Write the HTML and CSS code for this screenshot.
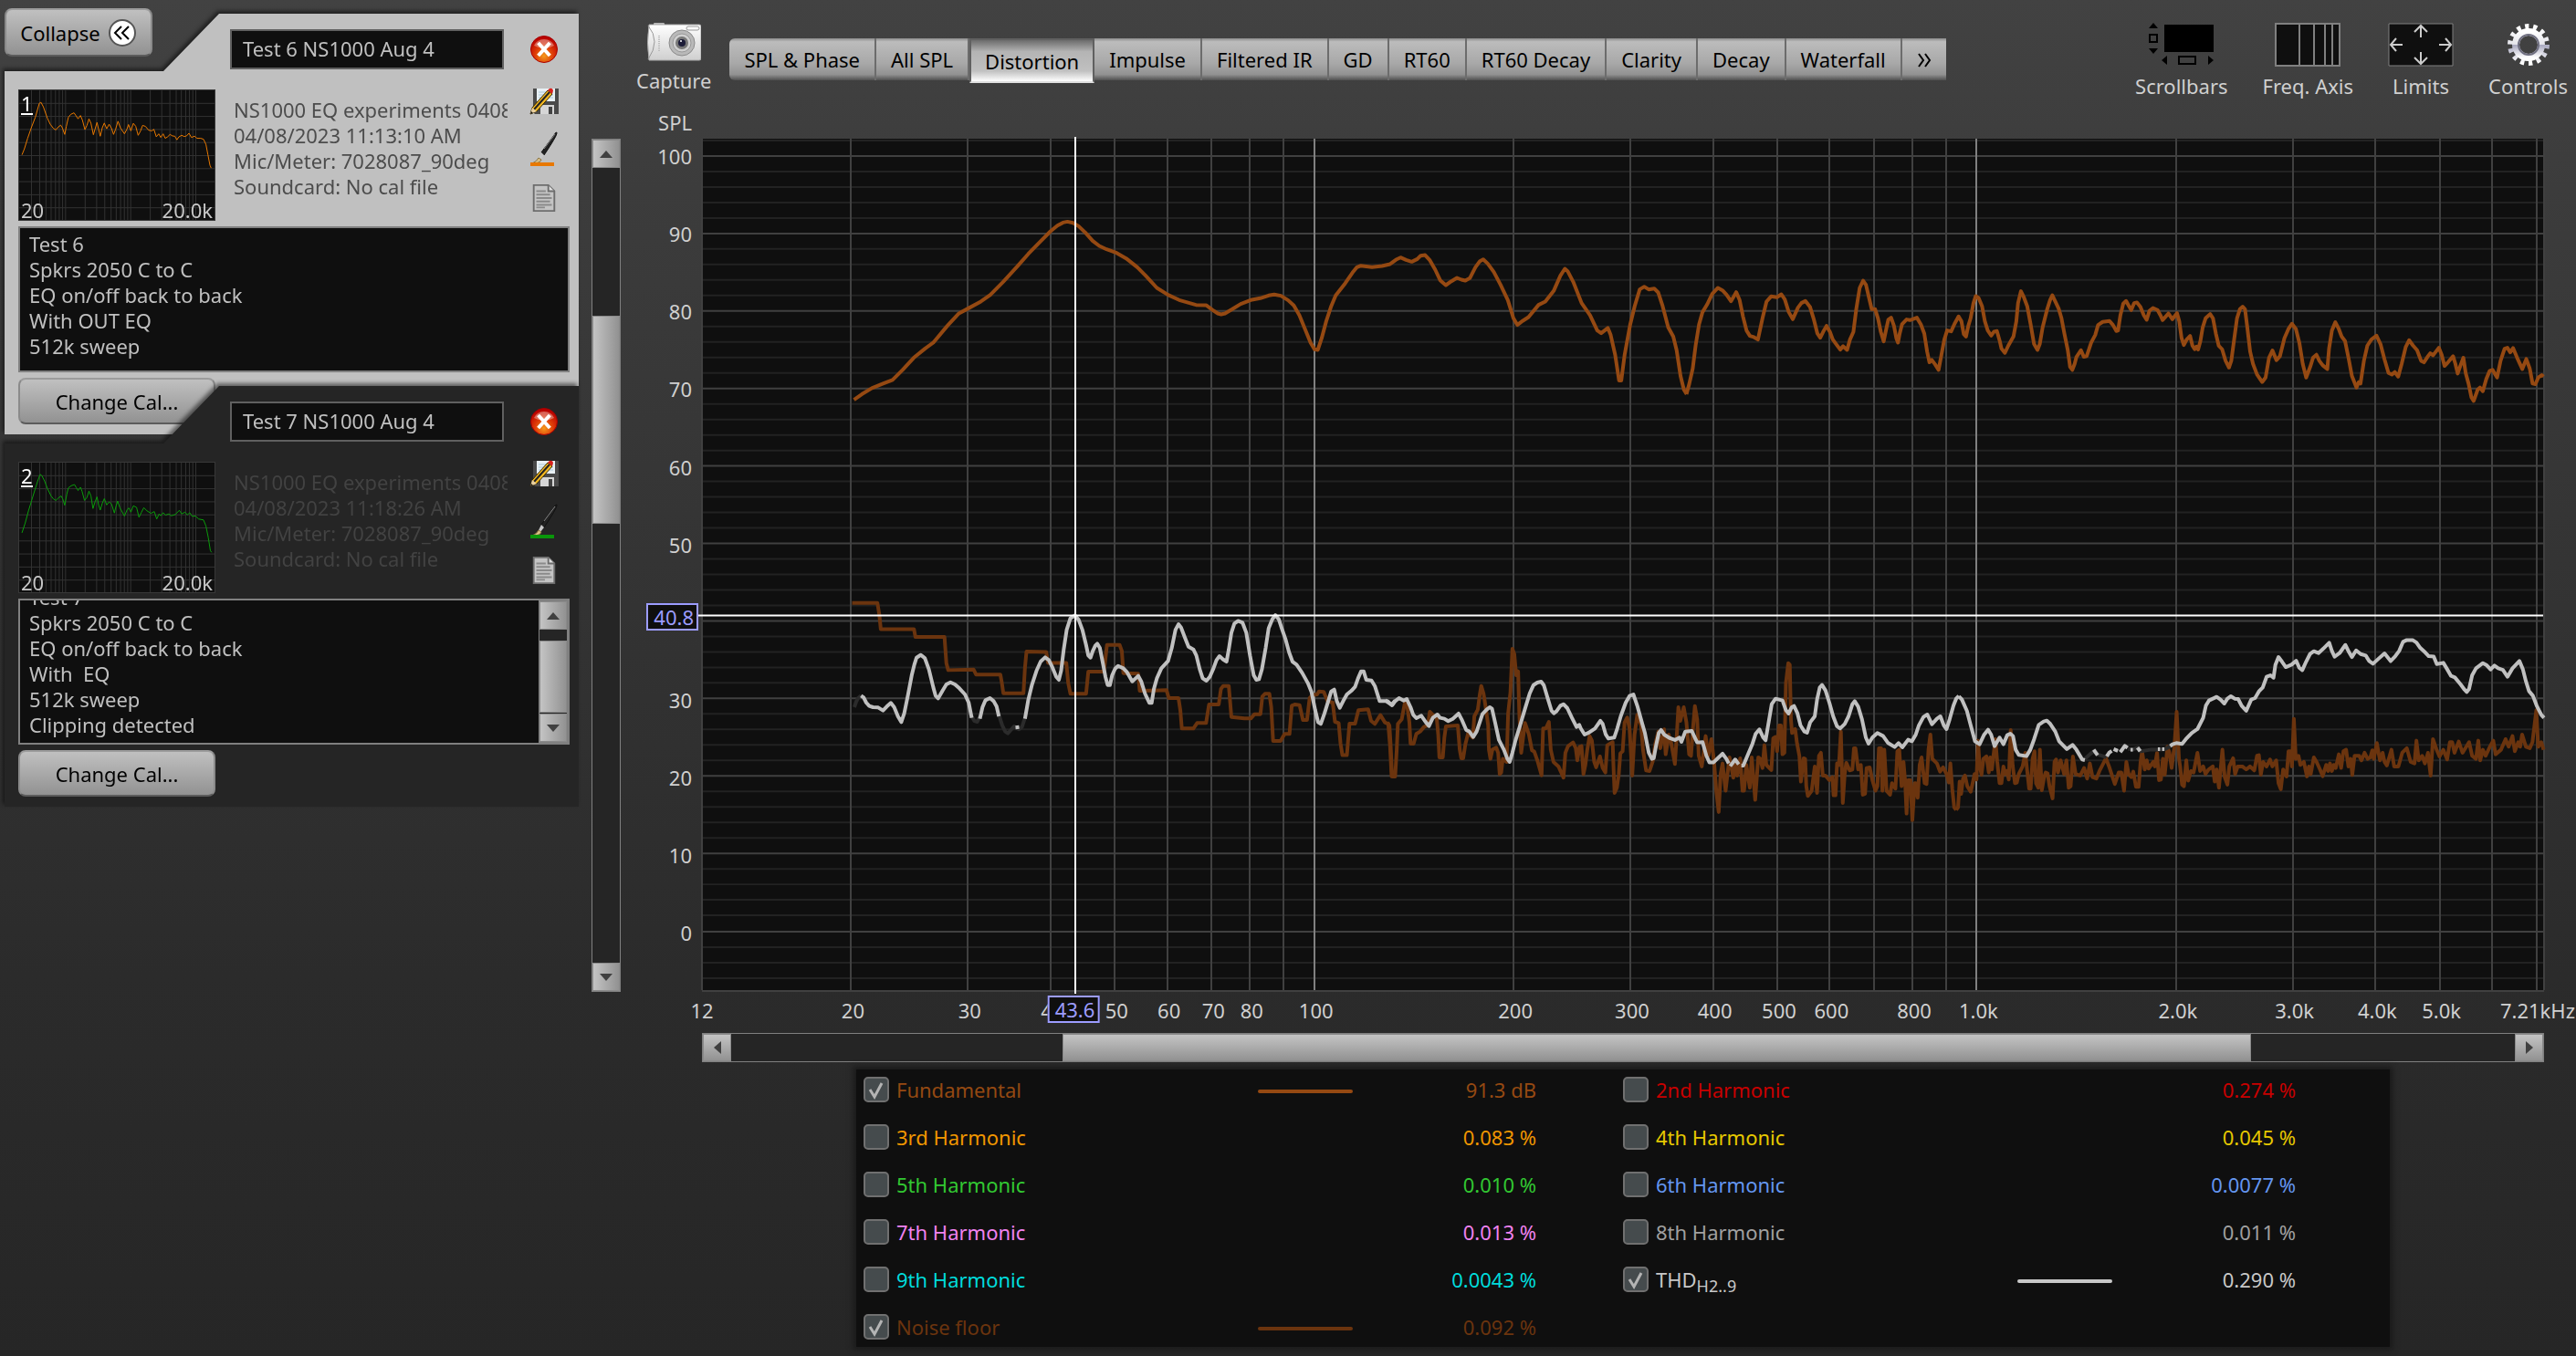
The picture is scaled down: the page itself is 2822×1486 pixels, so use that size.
FILE: index.html
```html
<!DOCTYPE html>
<html lang="en">
  <head>
    <meta charset="UTF-8" />
    <meta name="viewport" content="width=device-width, initial-scale=1.0" />
    <title>Distortion</title>
    <link rel="stylesheet" href="styles.css">
  </head>
  <body>
    <!-- shared icons -->
    <svg class="defs" aria-hidden="true">
      <defs>
        <radialGradient id="redBall" cx=".5" cy=".75" r=".7">
          <stop offset="0" stop-color="#f59a1c" />
          <stop offset=".5" stop-color="#dd3a08" />
          <stop offset="1" stop-color="#b80000" />
        </radialGradient>
        <linearGradient id="metal" x1="0" y1="0" x2="0" y2="1">
          <stop offset="0" stop-color="#ffffff" />
          <stop offset=".48" stop-color="#e4e4ea" />
          <stop offset=".52" stop-color="#a9a9c0" />
          <stop offset="1" stop-color="#ffffff" />
        </linearGradient>
        <linearGradient id="white" x1="0" y1="0" x2="0" y2="1">
          <stop offset="0" stop-color="#ffffff" />
          <stop offset="1" stop-color="#cfcfcf" />
        </linearGradient>
        <symbol id="icon-close" viewBox="0 0 32 32">
          <circle cx="16" cy="16" r="14.5" fill="url(#redBall)" stroke="#a80000" stroke-width="1" />
          <path d="M5 12a11.500 10 0 0 1 22 0q-11 6-22 0z" fill="#fff" opacity=".35" />
          <path d="M11 10.500l10 11M21 10.500l-10 11" stroke="#fff" stroke-width="4" stroke-linecap="square" />
        </symbol>
        <symbol id="icon-save" viewBox="0 0 32 32">
          <path d="M4 2h28v28H6l-2-2z" fill="#4a4a4a" />
          <path d="M8 2h20v14H8z" fill="#e8f0f4" />
          <path d="M10 6h16M10 9h16M10 12h16" stroke="#a9c8d8" stroke-width="1" />
          <path d="M12 20h15v10H12z" fill="#d6d6d6" />
          <path d="M21 22h4v8h-4z" fill="#444" />
          <path d="M1 30l2-7L20 4l5 4L8 27z" fill="#f2b822" stroke="#3a2a00" stroke-width="1" />
          <path d="M5 25L22 6" stroke="#222" stroke-width="2" />
          <path d="M20 4l2-2q3-1 4 2l-1 4z" fill="#d8201c" />
          <path d="M1 30l2-7 5 4z" fill="#e8cfa0" />
          <path d="M1 30l1-3 2 2z" fill="#111" />
        </symbol>
        <symbol id="icon-brush" viewBox="0 0 32 40">
          <path d="M13 23L27 4q3-5 3-2 0 3-14 24z" fill="#222" stroke="#111" stroke-width="1" />
          <path d="M16 19L28 3" stroke="#888" stroke-width="1" />
          <path d="M13 23l3 3-4 5-2-2z" fill="#c8c8c8" />
          <path d="M3 35q5-2 7-6l3 2q-1 4-10 4z" fill="#d9bf86" stroke="#8b7340" stroke-width="1" />
          <path d="M1 34h26v4H1z" fill="currentColor" />
        </symbol>
        <symbol id="icon-doc" viewBox="0 0 32 34">
          <path d="M4 2h17l7 7v23H4z" fill="#c4c4c4" stroke="#6d6d6d" stroke-width="2" />
          <path d="M21 2v7h7" fill="#e0e0e0" stroke="#6d6d6d" stroke-width="2" />
          <path d="M7 9h11M7 13h16M7 17h18M7 21h16M7 25h18M7 28h10" stroke="#8a8a8a" stroke-width="2" />
        </symbol>
      </defs>
    </svg>

    <aside class="sidebar">
      <button class="btn collapse" type="button">Collapse
        <svg viewBox="0 0 32 32" width="32" height="32" aria-hidden="true">
          <circle cx="16" cy="16" r="14" fill="#fff" stroke="#555" stroke-width="2" />
          <path d="M15 9l-7 7 7 7M23 9l-7 7 7 7" fill="none" stroke="#000" stroke-width="2" />
        </svg>
      </button>

      <section class="card card-active">
        <div class="card-body">
          <div class="name-row">
            <input class="name" type="text" value="Test 6 NS1000 Aug 4" aria-label="Measurement name">
            <button class="icon-btn" type="button" aria-label="Remove"><svg><use href="#icon-close" /></svg></button>
          </div>
          <div class="info">
            <div class="thumb">
              <svg class="thumb-plot" viewBox="0 0 216 144" preserveAspectRatio="none" aria-hidden="true">
                <g class="thumb-grid"></g>
                <g class="trace-orange" transform="scale(.446 .3333) translate(-45 -295)">
                  <polyline points="52,510 58,490 66,455 75,420 85,385 95,338 99,335 105,350 115,388 122,408 130,422 136,427 142,417 148,411 152,420 158,442 162,415 167,385 173,375 181,370 186,380 191,390 197,379 202,395 208,426 213,412 218,390 223,405 229,443 233,425 238,402 242,425 246,448 251,420 256,404 262,423 268,408 274,422 279,442 284,425 290,398 296,420 306,440 312,425 316,409 322,430 328,405 334,415 340,445 346,430 351,412 358,415 366,428 374,430 379,425 385,450 391,440 396,452 402,440 407,455 413,450 419,442 425,447 431,448 436,460 441,450 448,445 454,449 460,447 466,438 472,452 480,448 486,455 495,455 502,458 508,475 513,510 518,545 521,554" />
                </g>
              </svg>
              <span class="thumb-no">1</span>
              <span class="thumb-lo">20</span>
              <span class="thumb-hi">20.0k</span>
            </div>
            <div class="meta">
              <div>NS1000 EQ experiments 040823</div>
              <div>04/08/2023 11:13:10 AM</div>
              <div>Mic/Meter: 7028087_90deg</div>
              <div>Soundcard: No cal file</div>
            </div>
            <div class="tools">
              <button class="icon-btn" type="button" aria-label="Save"><svg><use href="#icon-save" /></svg></button>
              <button class="icon-btn brush orange" type="button" aria-label="Trace colour"><svg><use href="#icon-brush" /></svg></button>
              <button class="icon-btn" type="button" aria-label="Notes"><svg><use href="#icon-doc" /></svg></button>
            </div>
          </div>
          <div class="notes">
            <textarea aria-label="Notes">Test 6
Spkrs 2050 C to C
EQ on/off back to back
With OUT EQ
512k sweep</textarea>
          </div>
          <button class="btn cal" type="button">Change Cal...</button>
        </div>
      </section>

      <section class="card card-dark">
        <div class="card-body">
          <div class="name-row">
            <input class="name" type="text" value="Test 7 NS1000 Aug 4" aria-label="Measurement name">
            <button class="icon-btn" type="button" aria-label="Remove"><svg><use href="#icon-close" /></svg></button>
          </div>
          <div class="info">
            <div class="thumb">
              <svg class="thumb-plot" viewBox="0 0 216 144" preserveAspectRatio="none" aria-hidden="true">
                <g class="thumb-grid"></g>
                <g class="trace-green" transform="scale(.446 .3333) translate(-45 -319)">
                  <polyline points="52,553 60,520 68,480 76,445 84,410 91,380 97,358 101,362 108,380 115,405 124,430 130,440 136,445 142,437 149,430 153,440 158,461 163,425 167,403 174,396 182,392 187,403 191,412 197,401 201,415 207,445 213,435 218,414 223,430 228,472 233,450 238,433 242,460 246,477 251,455 256,439 262,460 268,450 274,457 281,487 285,465 289,447 295,470 306,497 313,475 317,470 322,484 328,463 336,468 342,501 348,485 354,469 362,480 372,488 380,482 386,507 392,490 396,496 402,486 408,494 416,490 422,496 432,492 442,478 448,490 456,484 462,493 468,486 474,498 482,497 490,507 502,510 508,530 514,570 519,612 522,618" />
                </g>
              </svg>
              <span class="thumb-no">2</span>
              <span class="thumb-lo">20</span>
              <span class="thumb-hi">20.0k</span>
            </div>
            <div class="meta">
              <div>NS1000 EQ experiments 040823</div>
              <div>04/08/2023 11:18:26 AM</div>
              <div>Mic/Meter: 7028087_90deg</div>
              <div>Soundcard: No cal file</div>
            </div>
            <div class="tools">
              <button class="icon-btn" type="button" aria-label="Save"><svg><use href="#icon-save" /></svg></button>
              <button class="icon-btn brush green" type="button" aria-label="Trace colour"><svg><use href="#icon-brush" /></svg></button>
              <button class="icon-btn" type="button" aria-label="Notes"><svg><use href="#icon-doc" /></svg></button>
            </div>
          </div>
          <div class="notes">
            <textarea class="scrolled" aria-label="Notes">Test 7
Spkrs 2050 C to C
EQ on/off back to back
With  EQ
512k sweep
Clipping detected</textarea>
            <div class="scroll vertical">
              <button type="button" class="arrow up" aria-label="Scroll up"></button>
              <div class="track"><div class="handle notes-handle"></div></div>
              <button type="button" class="arrow down" aria-label="Scroll down"></button>
            </div>
          </div>
          <button class="btn cal" type="button">Change Cal...</button>
        </div>
      </section>
    </aside>

    <main class="main">
      <header class="toolbar">
        <button class="tool" type="button">
          <svg viewBox="0 0 60 42" width="60" height="42" aria-hidden="true">
            <rect x="8" y="0" width="12" height="4" rx="1" fill="#bbb" />
            <path d="M3 2h55q2 0 2 2v35q0 2-2 2H3q-3-19 0-39z" fill="url(#white)" stroke="#aaa" />
            <path d="M2 3q14 17 0 37" fill="none" stroke="#999" />
            <rect x="44" y="4" width="14" height="4" rx="2" fill="none" stroke="#999" />
            <path d="M14 14v18" stroke="#bbb" stroke-width="2" stroke-dasharray="1 1" />
            <circle cx="39" cy="22" r="14" fill="#b9b9b9" stroke="#8a8a8a" />
            <circle cx="39" cy="22" r="10" fill="#d0d0d0" stroke="#999" />
            <circle cx="39" cy="22" r="7" fill="#777" />
            <circle cx="39" cy="22" r="4" fill="#1c1c38" />
            <circle cx="38" cy="20" r="1" fill="#fff" />
          </svg>
          Capture
        </button>
        <nav class="tabs">
          <button type="button">SPL &amp; Phase</button>
          <button type="button">All SPL</button>
          <button type="button" class="selected">Distortion</button>
          <button type="button">Impulse</button>
          <button type="button">Filtered IR</button>
          <button type="button">GD</button>
          <button type="button">RT60</button>
          <button type="button">RT60 Decay</button>
          <button type="button">Clarity</button>
          <button type="button">Decay</button>
          <button type="button">Waterfall</button>
          <button type="button" aria-label="More">
            <svg viewBox="0 0 16 16" width="16" height="16"><path d="M2 1l5 7-5 7M9 1l5 7-5 7" fill="none" stroke="#000" stroke-width="2" /></svg>
          </button>
        </nav>
        <div class="options">
          <button class="tool" type="button">
            <svg viewBox="0 0 72 48" width="72" height="48" aria-hidden="true">
              <path d="M17 2h54v30H17zM5 0l5 6H0zM5 34l5-6H0zM14 41l6-5v10zM71 41l-6-5v10z" />
              <path d="M1 13h8v8H1zM33 37h18v8H33z" fill="none" stroke="#000" stroke-width="2" />
            </svg>
            Scrollbars
          </button>
          <button class="tool" type="button">
            <svg viewBox="0 0 72 48" width="72" height="48" aria-hidden="true">
              <path d="M1 1h70v46H1z" fill="#0f0f0f" stroke="#808080" stroke-width="2" />
              <path d="M27 1v46M43 1v46M55 1v46M63 1v46" stroke="#808080" stroke-width="2" />
            </svg>
            Freq. Axis
          </button>
          <button class="tool" type="button">
            <svg viewBox="0 0 72 48" width="72" height="48" aria-hidden="true">
              <path d="M1 1h70v46H1z" fill="#0f0f0f" stroke="#808080" />
              <path d="M36 16V3M29 10l7-7 7 7M36 32v13M29 38l7 7 7-7M16 24H3M9 17l-6 7 6 7M56 24h13M63 17l6 7-6 7" fill="none" stroke="#ccc" stroke-width="2" />
            </svg>
            Limits
          </button>
          <button class="tool" type="button">
            <svg viewBox="-24 -24 48 48" width="48" height="48" aria-hidden="true">
              <circle r="20" fill="none" stroke="url(#metal)" stroke-width="6" stroke-dasharray="4.200 4.780" />
              <circle r="14" fill="none" stroke="url(#metal)" stroke-width="8" />
              <circle r="11" fill="none" stroke="#6f6f80" stroke-width="2" />
            </svg>
            Controls
          </button>
        </div>
      </header>

      <div class="scroll vertical spl-scroll">
        <button type="button" class="arrow up" aria-label="Scroll up"></button>
        <div class="track"><div class="handle spl-handle"></div></div>
        <button type="button" class="arrow down" aria-label="Scroll down"></button>
      </div>

      <div class="y-title">SPL</div>
      <div class="y-axis"></div>

      <div class="plot">
        <svg viewBox="0 0 2018 934" preserveAspectRatio="none" role="img" aria-label="Distortion plot">
          <g id="grid"></g>

          <g class="fundamental">
            <polyline transform="translate(131 -3) scale(.61224 .33333)" points="58,868 72,850 90,830 110,815 127,803 145,770 165,730 185,700 200,680 225,625 245,585 262,568 285,545 302,523 325,480 350,430 370,388 390,350 410,313 422,295 432,285 440,282 450,286 460,297 472,318 485,345 497,362 510,373 528,385 545,403 565,432 580,460 600,500 620,523 640,540 670,556 688,557 700,573 709,584 715,587 722,584 735,570 750,553 768,540 785,534 800,525 810,522 822,526 835,541 845,558 855,590 865,635 875,680 882,702 888,704 895,665 903,610 912,560 920,525 937,485 950,450 958,432 965,427 985,432 1003,428 1017,422 1028,407 1036,400 1046,408 1056,414 1066,405 1072,394 1080,392 1088,408 1098,440 1107,475 1117,491 1127,478 1137,467 1145,473 1152,476 1160,468 1170,432 1178,412 1184,406 1192,420 1203,448 1215,490 1228,540 1238,600 1245,622 1255,608 1265,596 1283,556 1295,545 1310,510 1322,460 1330,437 1335,445 1345,480 1360,550 1375,590 1388,640 1395,649 1407,632 1412,655 1420,720 1427,805 1431,805 1437,720 1447,620 1455,560 1464,505 1472,496 1480,505 1490,502 1497,515 1505,560 1515,630 1524,660 1530,705 1537,790 1543,835 1548,850" />
            <polyline transform="translate(1071 97) scale(.62629 .33333)" points="12,550 17,515 23,465 28,390 34,320 40,280 48,255 57,220 67,200 75,208 82,222 90,244 99,214 105,240 111,295 117,340 123,358 130,362 137,370 145,300 152,245 160,228 170,231 178,221 184,238 191,280 198,303 207,265 213,250 220,243 228,262 235,305 241,350 246,364 251,345 257,325 263,345 268,370 275,388 281,403 286,392 293,404 298,370 304,345 309,270 315,200 321,176 326,190 331,230 336,270 342,270 347,300 352,345 357,376 362,330 365,305 370,298 375,325 379,365 382,380 385,350 389,320 397,304 403,306 415,298 422,320 428,350 433,410 437,445 441,437 447,452 453,470 458,420 463,370 468,340 475,343 481,318 488,294 493,310 497,352 501,360 505,325 509,300 514,250 518,227 523,233 529,260 534,310 539,340 545,357 550,344 555,342 560,375 563,400 569,414 575,390 584,360 589,310 592,250 597,211 602,230 608,260 614,320 620,385 626,404 630,385 635,330 643,270 648,240 652,224 656,240 663,268 668,300 673,350 679,405 683,460 687,470 691,450 694,428 702,405 707,427 712,425 720,380 727,355 732,322 740,312 752,309 758,322 764,342 767,340 771,290 776,252 781,243 786,260 790,273 795,250 800,248 806,262 812,290 817,305 822,275 828,266 836,273 841,290 845,306 850,295 855,284 862,303 870,283 874,310 878,365 882,388 887,370 893,358 897,390 901,402 904,393 907,403 911,375 915,330 920,300 928,286 933,300 938,350 943,390 949,402 955,440 961,462 965,440 970,370 975,300 980,270 985,262 989,270 993,330 998,410 1003,450 1010,485 1019,510 1025,495 1031,430 1037,406 1044,438 1050,425 1058,365 1065,335 1071,318 1078,335 1084,380 1090,450 1096,495 1103,460 1108,430 1114,420 1119,440 1125,455 1133,467 1136,400 1141,340 1147,313 1153,335 1158,360 1164,375 1170,430 1176,490 1184,528 1188,510 1191,515 1197,440 1203,390 1210,370 1219,357 1226,385 1233,435 1240,480 1246,485 1251,477 1257,492 1263,450 1270,395 1276,372 1283,390 1290,405 1297,440 1302,445 1309,425 1313,415 1318,422 1328,397 1333,420 1338,457 1344,445 1353,425 1357,450 1361,482 1366,455 1371,430 1375,480 1380,515 1385,560 1389,572 1396,535 1400,528 1405,540 1411,500 1417,473 1422,470 1430,495 1436,440 1443,400 1448,397 1453,412 1458,398 1465,430 1474,467 1481,434 1487,465 1492,515 1497,517 1502,495 1508,487 1511,492" />
          </g>

          <g class="noise">
            <polyline transform="translate(131 467) scale(.40816 .33333)" points="82,127 150,127 155,165 159,213 248,213 252,239 330,239 335,325 340,348 408,346 415,363 480,363 484,390 488,424 542,424 546,340 550,287 603,288 608,324 657,324 662,390 668,426 710,426 716,353 758,353 763,300 766,265 800,265 806,285 810,358 850,360 854,416 926,414 932,440 958,440 963,480 967,540 998,540 1008,522 1032,522 1040,461 1066,461 1072,410 1078,400 1093,400 1100,502 1135,507 1152,507 1162,493 1178,493 1183,435 1190,426 1202,426 1207,470 1212,581 1232,581 1243,558 1256,558 1262,465 1270,461 1283,463 1292,512 1303,512 1310,440 1318,430 1330,428 1335,418 1348,420 1358,450 1372,455 1378,518 1388,522 1393,590 1398,628 1410,628 1417,524 1432,524 1441,480 1467,477 1475,515 1485,525 1500,496 1512,520 1521,525 1526,600 1530,697 1539,697" />
            <polyline transform="translate(751 497) scale(.42091 .33333)" points="0,430 5,440 8,500 12,608 20,608 24,520 27,435 37,420 45,367 51,372 57,430 60,500 68,500 75,468 85,460 95,445 105,440 110,395 118,405 128,415 132,470 135,545 144,545 148,480 152,443 183,440 188,520 192,548 197,548 203,500 210,465 222,480 226,410 235,388 240,340 244,310 250,335 255,375 262,440 264,520 268,550 273,520 283,513 288,530 292,600 296,595 300,550 310,560 314,400 320,330 325,188 330,205 335,275 340,262 343,400 348,530 353,480 358,432 368,470 376,522 382,526 390,555 401,604 405,450 412,450 420,428 425,520 432,560 445,575 458,612 463,530 470,508 483,496 490,515 494,555 500,510 505,508 510,600 515,570 520,520 526,475 532,490 538,560 543,578 553,542 560,580 567,595 572,505 586,495 588,570 591,662 597,645 602,600 606,532 612,525 617,430 624,414 630,450 637,605 643,470 650,405 660,440 665,520 673,588 682,590 690,560 697,500 705,460 710,515 720,453 724,535 732,470 738,495 748,567 753,470 757,380 762,425 771,380 778,430 785,535 790,540 795,450 800,376 806,420 810,540 818,575 828,475 835,540 843,485 850,560 856,660 862,725 867,600 872,565 880,655 890,545 900,612 905,560 910,605 918,548 924,655 928,655 934,570 943,645 948,545 957,685 965,545 970,550 976,580 981,505 986,570 999,587 1004,482 1010,478 1014,525 1019,440 1024,440 1028,535 1033,530 1037,300 1043,235 1047,240 1050,420 1053,465 1061,452 1066,500 1072,540 1076,625 1083,548 1087,550 1090,640 1094,672 1104,655 1112,575 1118,662 1123,540 1128,530 1133,605 1140,605 1150,620 1158,610 1161,670 1166,670 1170,565 1175,570 1180,460 1185,695 1190,600 1194,563 1203,588 1210,585 1214,515 1218,515 1225,585 1232,570 1237,668 1243,665 1247,580 1255,578 1262,620 1270,655 1275,640 1279,515 1285,515 1288,655 1293,520 1299,655 1308,668 1313,630 1322,648 1327,525 1332,520 1338,640 1343,560 1347,620 1351,730 1355,620 1361,620 1366,752 1372,630 1375,630 1380,678 1385,570 1390,545 1398,630 1403,633 1408,520 1413,470 1418,550 1430,565 1438,592 1446,578 1455,600 1461,628 1465,565 1470,650 1475,710 1480,718" />
            <polyline transform="translate(1371 507) scale(.42091 .33333)" points="7,688 12,680 16,595 20,635 25,585 30,575 36,610 45,628 50,600 55,570 60,588 64,460 68,540 73,572 78,520 86,512 92,565 96,515 100,555 105,500 109,455 114,530 120,600 125,600 130,545 135,570 139,560 144,588 149,425 154,540 160,600 165,598 170,570 180,545 187,500 192,560 197,618 201,618 206,520 211,495 215,600 221,615 225,490 230,623 236,580 240,565 245,568 250,610 258,650 263,530 267,522 272,565 279,525 288,570 294,525 300,615 305,610 311,512 318,570 330,575 340,550 348,585 355,535 362,580 372,585 380,560 397,518 405,545 420,603 430,565 437,565 444,625 450,530 456,570 463,580 468,562 475,612 482,612 487,530 491,495 498,555 503,525 508,552 520,530 524,545 530,500 535,590 540,588 545,520 550,572 557,480 562,500 568,550 575,480 581,365 587,520 590,545 595,605 600,610 606,525 611,592 618,560 625,565 635,500 642,560 650,545 656,570 664,555 675,545 680,595 685,555 691,615 700,490 706,580 713,605 718,545 728,518 733,570 740,545 752,545 762,555 772,545 783,558 790,510 795,508 800,572 806,530 815,545 824,522 830,545 840,525 846,600 852,620 858,555 867,578 872,495 877,495 881,545 886,388 891,520 898,510 903,540 912,530 920,578 925,545 930,570 938,515 945,530 954,555 961,577 970,540 975,560 980,535 985,560 990,540 995,550 1003,505 1009,550 1015,495 1022,490 1028,545 1034,520 1038,573 1044,510 1056,510 1062,525 1070,500 1078,520 1085,515 1090,492 1094,520 1102,468 1110,525 1117,500 1122,530 1128,542 1140,490 1147,545 1158,545 1168,500 1180,485 1190,530 1200,535 1205,460 1211,525 1220,510 1227,535 1235,500 1242,575 1248,455 1257,488 1265,512 1275,490 1285,522 1292,465 1298,465 1304,500 1315,463 1325,500 1342,465 1350,510 1360,520 1366,460 1371,525 1378,490 1385,510 1397,478 1405,460 1411,505 1425,490 1437,455 1445,480 1455,445 1461,495 1470,465 1475,480 1480,440 1490,480 1500,485 1507,465 1517,360 1522,480 1530,465 1536,490" />
          </g>

          <!-- THD, drawn dim where it falls below the noise floor -->
          <g class="thd below">
            <polyline transform="translate(131 467) scale(.40816 .33333)" points="88,470 93,452 98,440 106,432" />
            <polyline transform="translate(131 467) scale(.40816 .33333)" points="403,500 410,515 418,518 425,500" />
            <polyline transform="translate(131 467) scale(.40816 .33333)" points="476,495 485,530 493,550 500,556 508,545 517,533 530,543 538,535 546,505" />
            <polyline transform="translate(1371 507) scale(.42091 .33333)" points="342,520 355,505 368,492 375,505 398,515" />
            <polyline transform="translate(1371 507) scale(.42091 .33333)" points="455,487 465,490 480,483 488,495 512,490 533,490 549,489 565,478" />
          </g>
          <g class="thd">
            <polyline transform="translate(131 467) scale(.40816 .33333)" points="106,432 113,438 120,455 128,466 138,470 152,471 165,481 175,468 186,456 195,470 205,500 214,519 222,490 232,430 242,365 249,330 255,307 266,298 277,308 288,345 300,405 306,432 313,441 325,415 335,395 346,388 358,395 370,408 385,428 395,455 403,505" />
            <polyline transform="translate(131 467) scale(.40816 .33333)" points="425,508 432,470 440,447 452,440 462,450 470,468 476,500" />
            <polyline transform="translate(131 467) scale(.40816 .33333)" points="525,530 526,542" />
            <polyline transform="translate(131 467) scale(.40816 .33333)" points="546,508 555,445 565,395 577,350 588,320 600,306 610,315 620,340 630,370 637,380 643,350 650,280 658,215 668,177 680,168 690,182 700,215 710,265 716,300 722,307 728,285 735,267 740,261 747,275 755,325 762,370 768,397 774,397 780,365 788,343 796,334 810,342 820,355 834,385 843,375 850,367 858,385 868,425 880,456 886,456 892,410 900,375 912,342 930,318 940,275 950,215 958,197 965,208 975,240 985,271 998,280 1006,300 1015,345 1023,375 1033,383 1042,370 1052,342 1060,315 1068,302 1078,313 1087,320 1093,280 1100,225 1108,195 1118,186 1130,192 1140,225 1150,300 1160,365 1167,380 1174,378 1182,345 1192,275 1200,210 1210,180 1218,167 1227,180 1235,210 1245,245 1255,290 1264,320 1275,330 1290,357 1305,390 1315,420 1325,480 1333,520 1340,525 1350,490 1360,450 1368,418 1376,412 1383,450 1391,472 1400,450 1410,428 1422,416 1432,403 1440,375 1448,352 1455,352 1462,380 1476,382 1485,400 1498,450 1515,450 1530,462 1540,448" />
            <polyline transform="translate(751 497) scale(.42091 .33333)" points="-5,358 0,360 12,374 20,360 30,350 42,358 50,353 60,380 67,405 75,416 88,408 100,430 108,442 118,415 130,404 137,415 148,418 158,426 170,418 185,401 193,420 205,455 213,460 223,478 232,460 240,430 247,403 258,388 266,380 272,385 280,430 290,488 303,520 312,550 318,560 325,530 333,490 345,440 358,385 370,335 380,307 390,299 400,296 407,308 418,355 427,392 433,400 440,393 450,375 458,370 468,383 480,415 492,445 499,438 503,450 513,470 525,463 540,450 554,425 560,435 568,470 575,483 590,480 598,450 607,410 620,365 630,343 640,338 650,375 662,430 670,465 680,530 688,550 693,548 700,500 706,465 712,455 720,470 735,482 748,488 760,480 765,494 775,460 792,458 800,480 806,496 820,495 830,540 838,562 848,562 862,545 872,533 882,550 888,565" />
            <polyline transform="translate(751 497) scale(.42091 .33333)" points="892,574 905,552 914,568" />
            <polyline transform="translate(751 497) scale(.42091 .33333)" points="921,572 926,572 935,545 950,500 958,468 968,453 978,480 984,489 992,430 1000,370 1010,352 1028,358 1037,390 1044,401 1052,380 1058,376 1067,400 1075,440 1085,460 1092,464 1100,430 1112,410 1118,355 1125,315 1131,307 1140,325 1150,365 1160,410 1170,443 1178,450 1190,435 1200,410 1210,370 1216,360 1225,378 1235,420 1245,480 1252,500 1262,480 1275,465 1290,475 1303,498 1320,511 1330,498 1340,512 1355,487 1365,492 1375,470 1383,440 1395,412 1405,404 1417,436 1430,418 1439,410 1448,440 1455,452 1463,420 1473,375 1480,352 1487,343" />
            <polyline transform="translate(1371 507) scale(.42091 .33333)" points="14,314 22,325 35,362 45,410 56,462 68,472 80,440 90,424 98,440 107,478 120,450 130,472 140,442 148,437 155,445 162,490 170,507 190,511 200,490 210,455 222,408 235,397 243,394 252,405 265,430 275,462 295,488 310,474 320,490 335,522 342,524" />
            <polyline transform="translate(1371 507) scale(.42091 .33333)" points="365,490 375,508" />
            <polyline transform="translate(1371 507) scale(.42091 .33333)" points="399,512 405,500 412,494" />
            <polyline transform="translate(1371 507) scale(.42091 .33333)" points="417,488 428,494" />
            <polyline transform="translate(1371 507) scale(.42091 .33333)" points="434,498 440,488 446,477 453,484" />
            <polyline transform="translate(1371 507) scale(.42091 .33333)" points="461,490 467,490" />
            <polyline transform="translate(1371 507) scale(.42091 .33333)" points="479,483 486,495" />
            <polyline transform="translate(1371 507) scale(.42091 .33333)" points="532,488 538,488" />
            <polyline transform="translate(1371 507) scale(.42091 .33333)" points="543,488 549,488" />
            <polyline transform="translate(1371 507) scale(.42091 .33333)" points="564,478 570,472 580,468 595,471 605,455 620,435 635,422 650,385 657,345 665,328 685,316 695,325 705,338 713,322 722,314 732,322 741,323 750,345 762,362 775,325 785,320 795,298 805,285 815,250 825,245 833,253 838,210 846,185 855,200 865,218 880,210 892,197 900,220 908,228 918,200 928,175 938,166 950,172 962,158 978,138 985,165 992,184 1005,172 1020,145 1030,170 1037,185 1048,163 1060,175 1073,180 1082,198 1092,207 1105,192 1122,173 1138,198 1150,182 1160,165 1170,135 1180,129 1195,129 1205,137 1215,155 1228,170 1237,182 1250,183 1258,208 1275,204 1285,225 1295,247 1305,252 1320,275 1330,292 1336,300 1342,290 1350,245 1360,222 1378,205 1388,212 1398,226 1408,213 1418,222 1430,227 1442,250 1455,222 1473,198 1482,225 1490,265 1498,297 1508,312 1518,345 1530,375 1537,385" />
          </g>

          <path class="cursor" d="M409 -2V938M-4 523H2017" />
        </svg>
      </div>

      <div class="x-axis"></div>

      <div class="scroll horizontal freq-scroll">
        <button type="button" class="arrow left" aria-label="Scroll left"></button>
        <div class="track"><div class="handle freq-handle"></div></div>
        <button type="button" class="arrow right" aria-label="Scroll right"></button>
      </div>

      <section class="legend">
        <div class="entry c-fund"><input type="checkbox" id="h1" checked><label for="h1">Fundamental</label><i class="swatch"></i><output>91.3 dB</output></div>
        <div class="entry c-h2"><input type="checkbox" id="h2"><label for="h2">2nd Harmonic</label><output>0.274 %</output></div>
        <div class="entry c-h3"><input type="checkbox" id="h3"><label for="h3">3rd Harmonic</label><output>0.083 %</output></div>
        <div class="entry c-h4"><input type="checkbox" id="h4"><label for="h4">4th Harmonic</label><output>0.045 %</output></div>
        <div class="entry c-h5"><input type="checkbox" id="h5"><label for="h5">5th Harmonic</label><output>0.010 %</output></div>
        <div class="entry c-h6"><input type="checkbox" id="h6"><label for="h6">6th Harmonic</label><output>0.0077 %</output></div>
        <div class="entry c-h7"><input type="checkbox" id="h7"><label for="h7">7th Harmonic</label><output>0.013 %</output></div>
        <div class="entry c-h8"><input type="checkbox" id="h8"><label for="h8">8th Harmonic</label><output>0.011 %</output></div>
        <div class="entry c-h9"><input type="checkbox" id="h9"><label for="h9">9th Harmonic</label><output>0.0043 %</output></div>
        <div class="entry c-thd"><input type="checkbox" id="thd" checked><label for="thd">THD<sub>H2..9</sub></label><i class="swatch"></i><output>0.290 %</output></div>
        <div class="entry c-noise"><input type="checkbox" id="noise" checked><label for="noise">Noise floor</label><i class="swatch"></i><output>0.092 %</output></div>
      </section>
    </main>
    <script src="script.js"></script>
  </body>
</html>
```
FILE: styles.css
```css
* {
  box-sizing: border-box;
}

body {
  margin: 0;
  min-height: 100vh;
  display: grid;
  grid-template-columns: 634px 1fr;
  column-gap: 14px;
  background: linear-gradient(#424242, #3c3c3c 14%, #2b2b2b 72%, #262626);
  color: #d0d0d0;
  font-family: "Noto Sans", "Open Sans", sans-serif;
  font-size: 22px;
  line-height: 28px;
}

button,
input,
textarea {
  font: inherit;
  color: inherit;
  margin: 0;
}

button {
  border: none;
  padding: 0;
  background: none;
  cursor: pointer;
}

.defs {
  position: absolute;
  width: 0;
  height: 0;
}

/* sidebar */

.sidebar {
  padding: 9px 0 0 5px;
}

.btn {
  display: flex;
  align-items: center;
  justify-content: center;
  gap: 8px;
  color: #000;
  background: linear-gradient(#c0c0c0, #929292);
  border: 2px solid #8a8a8a;
  border-top-color: #9c9c9c;
  border-bottom-color: #5c5c5c;
  border-radius: 8px;
}

.collapse {
  position: relative;
  z-index: 1;
  width: 162px;
  height: 53px;
}

.card {
  margin-top: -47px;
  filter: drop-shadow(-2px -3px 2px rgba(0, 0, 0, 0.5));
}

.card + .card {
  margin-top: -53px;
}

.card-body {
  padding: 17px 10px 11px 15px;
  clip-path: polygon(235px 0, 100% 0, 100% 100%, 0 100%, 0 63px, 174px 63px);
}

.card-active .card-body {
  background: #c0c0c0;
  color: #4c4c4c;
}

.card-dark .card-body {
  background: #252525;
  color: #424242;
}

.name-row {
  display: flex;
  align-items: center;
  gap: 28px;
  padding-left: 232px;
}

.name {
  width: 300px;
  height: 44px;
  padding: 0 12px 2px;
  background: #0f0f0f;
  border: 2px solid #606060;
  color: #c0c0c0;
}

.icon-btn {
  width: 32px;
  height: 32px;
}

.icon-btn svg {
  display: block;
  width: 100%;
  height: 100%;
}

.brush {
  height: 40px;
}

.orange {
  color: #e87800;
}

.green {
  color: #0a960a;
}

.info {
  display: flex;
  margin: 22px 0 6px;
  height: 144px;
}

.thumb {
  position: relative;
  width: 216px;
  background: #0f0f0f;
  border: 1px solid #383838;
  color: #c8c8c8;
  line-height: 22px;
}

.thumb-plot {
  display: block;
  width: 100%;
  height: 100%;
}

.thumb-plot line {
  stroke: #333333;
  stroke-width: 1;
}

.thumb-plot polyline {
  fill: none;
  stroke-width: 1;
  stroke-linejoin: round;
  vector-effect: non-scaling-stroke;
}

.trace-orange {
  stroke: #e87800;
}

.trace-green {
  stroke: #0a9c0a;
}

.thumb-no,
.thumb-lo,
.thumb-hi {
  position: absolute;
}

.thumb-no {
  top: 3px;
  left: 2px;
  color: #fff;
  border-bottom: 2px solid #fff;
}

.thumb-lo {
  bottom: 0;
  left: 2px;
}

.thumb-hi {
  right: 2px;
  bottom: 0;
}

.meta {
  width: 300px;
  margin: 8px 24px 0 20px;
  overflow: hidden;
  white-space: nowrap;
}

.tools {
  display: flex;
  flex-direction: column;
  gap: 17px;
  margin-top: -3px;
}

.notes {
  display: flex;
  height: 160px;
  border: 2px solid #808080;
  background: #0f0f0f;
}

.notes textarea {
  flex: 1;
  padding: 3px 10px 6px;
  border: none;
  background: none;
  color: #c0c0c0;
  resize: none;
  overflow: hidden;
}

.cal {
  width: 216px;
  height: 51px;
  margin-top: 6px;
}

/* scrollbars */

.scroll {
  display: flex;
  background: #252525;
  border: 1px solid #808080;
}

.vertical {
  flex-direction: column;
  width: 32px;
}

.horizontal {
  height: 32px;
}

.track {
  position: relative;
  flex: 1;
}

.handle {
  position: absolute;
  border: 1px solid #8a8a8a;
}

.arrow {
  display: grid;
  place-items: center;
  flex: 0 0 31px;
  border: 1px solid #8a8a8a;
}

.vertical .arrow,
.vertical .handle {
  background: linear-gradient(90deg, #c4c4c4, #929292);
}

.horizontal .arrow,
.horizontal .handle {
  background: linear-gradient(#c4c4c4, #929292);
}

.vertical .handle {
  left: 0;
  right: 0;
}

.horizontal .handle {
  top: 0;
  bottom: 0;
}

.arrow::before {
  content: "";
  border: 7px solid transparent;
}

.up::before {
  border-top: 0;
  border-bottom: 8px solid #404040;
}

.down::before {
  border-bottom: 0;
  border-top: 8px solid #404040;
}

.left::before {
  border-left: 0;
  border-right: 8px solid #404040;
}

.right::before {
  border-right: 0;
  border-left: 8px solid #404040;
}

.notes-handle {
  top: 13%;
  bottom: 1%;
}

.spl-handle {
  top: 18.6%;
  bottom: 55.2%;
}

.freq-handle {
  left: 18.6%;
  right: 14.8%;
}

/* chart */

.main {
  display: grid;
  grid-template-columns: 32px 89px 1fr;
  grid-template-rows: 120px 32px 1fr 45px 32px auto;
  padding: 0 35px 10px 0;
}

.toolbar {
  grid-column: 1 / -1;
  display: flex;
  align-items: flex-start;
  margin-right: -26px;
  padding: 25px 0 0 49px;
}

.tool {
  display: flex;
  flex-direction: column;
  align-items: center;
  gap: 7px;
}

.tabs {
  display: flex;
  height: 48px;
  margin: 17px 0 0 20px;
}

.tabs button {
  height: 46px;
  padding: 0 16px;
  color: #000;
  background: linear-gradient(#8c8c8c, #bcbcbc 8%, #a8a8a8 60%, #929292 86%, #505050);
  border-right: 2px solid #6c6c6c;
}

.tabs button:first-child {
  border-radius: 6px 0 0 6px;
}

.tabs button:last-child {
  border-right: none;
}

.tabs .selected {
  height: 49px;
  background: linear-gradient(#6c6c6c, #b4b4b4 28%, #c0c0c0 75%, #fff);
  border: 2px solid #606060;
  border-bottom-color: #e0e0e0;
  padding: 0 15px;
}

.options {
  display: flex;
  gap: 38px;
  margin-left: auto;
}

.spl-scroll {
  grid-column: 1;
  grid-row: 3;
}

.y-title {
  grid-column: 2;
  grid-row: 2;
  text-align: right;
  padding-right: 11px;
}

.y-axis {
  grid-column: 2;
  grid-row: 3;
  position: relative;
}

.x-axis {
  grid-column: 3;
  grid-row: 4;
  position: relative;
}

.tick {
  position: absolute;
  white-space: nowrap;
}

.y-axis .tick {
  right: 11px;
  transform: translateY(-50%);
}

.x-axis .tick {
  top: 6px;
  transform: translateX(-50%);
}

.x-axis .tick-end {
  left: auto;
  right: -34px;
  transform: none;
}

.y-axis .readout,
.x-axis .readout {
  padding: 0 3px 0 6px;
  line-height: 26px;
  background: #0f0f0f;
  border: 2px solid #9c9cff;
  color: #9c9cff;
}

.y-axis .readout {
  right: 4px;
}

.x-axis .readout {
  top: 4px;
}

.plot {
  grid-column: 3;
  grid-row: 3;
  position: relative;
  background: #0f0f0f;
  border-bottom: 2px solid #404040;
}

.plot svg {
  position: absolute;
  width: 100%;
  height: 100%;
  overflow: visible;
}

.plot line {
  stroke: #222222;
  stroke-width: 2;
}

.plot .mid {
  stroke: #404040;
}

.plot .decade {
  stroke: #808080;
}

.plot polyline {
  fill: none;
  stroke-width: 4;
  stroke-linejoin: round;
  vector-effect: non-scaling-stroke;
}

.plot .fundamental {
  stroke: #954912;
}

.plot .noise {
  stroke: #6b340e;
}

.plot .thd {
  stroke: #c0c0c0;
}

.plot .below {
  stroke: #2b2b2b;
}

.cursor {
  fill: none;
  stroke: #fff;
  stroke-width: 2;
}

.freq-scroll {
  grid-column: 3;
  grid-row: 5;
}

/* legend */

.legend {
  grid-column: 3;
  grid-row: 6;
  justify-self: center;
  width: 100%;
  max-width: 1680px;
  margin-top: 8px;
  padding: 0 8px;
  display: grid;
  grid-template-columns: 1fr 1fr;
  grid-auto-rows: 52px;
  height: 304px;
  background: #0f0f0f;
  box-shadow: 0 0 6px 3px #1a1a1a;
}

.entry {
  display: grid;
  grid-template-columns: 28px 1fr 104px 193px;
  column-gap: 8px;
  align-items: center;
  height: 44px;
  padding-right: 95px;
}

.entry input {
  appearance: none;
  width: 28px;
  height: 28px;
  background: #454b4d;
  border: 2px solid #707070;
  border-radius: 5px;
}

.entry input:checked {
  background: #454b4d url("data:image/svg+xml,%3Csvg xmlns='http://www.w3.org/2000/svg' viewBox='0 0 24 24'%3E%3Cpath d='M5 12l5 8L18 5' fill='none' stroke='%23b4b4b4' stroke-width='3'/%3E%3C/svg%3E");
}

.entry output {
  grid-column: 4;
  text-align: right;
}

.entry sub {
  font-size: 18px;
  line-height: 0;
}

.swatch {
  height: 4px;
  margin-top: 4px;
  border-radius: 2px;
  background: currentColor;
}

.c-fund { color: #954912; }
.c-h2 { color: #c80000; }
.c-h3 { color: #f09600; }
.c-h4 { color: #e6c800; }
.c-h5 { color: #32c832; }
.c-h6 { color: #6496f0; }
.c-h7 { color: #f082f0; }
.c-h8 { color: #a0a0a0; }
.c-h9 { color: #00dcdc; }
.c-thd { color: #c8c8c8; }
.c-noise { color: #6b340e; }
```
FILE: script.js
```js
const W = 2018;
const H = 934;
const DECADE = 725.7;
const X100 = 670.7;
const DB = 8.505;

const xOf = (f) => X100 + Math.log10(f / 100) * DECADE;
const yOf = (db) => 19 + (100 - db) * DB;

function line(parent, x1, y1, x2, y2, cls) {
  const el = document.createElementNS("http://www.w3.org/2000/svg", "line");
  el.setAttribute("x1", x1);
  el.setAttribute("y1", y1);
  el.setAttribute("x2", x2);
  el.setAttribute("y2", y2);
  if (cls) el.setAttribute("class", cls);
  parent.appendChild(el);
}

// main grid
const grid = document.getElementById("grid");
for (let db = 102; db >= -6; db -= 2) {
  if (db % 10 !== 0) line(grid, 0, Math.round(yOf(db)), W, Math.round(yOf(db)));
}
for (let db = 100; db >= 0; db -= 10) {
  line(grid, 0, Math.round(yOf(db)), W, Math.round(yOf(db)), "mid");
}
line(grid, 0, 0, 0, H, "mid");
line(grid, W, 0, W, H, "mid");
for (const base of [10, 100, 1000]) {
  for (let n = 1; n < 10; n++) {
    const x = Math.round(xOf(base * n));
    if (x > 10 && x < W) line(grid, x, 0, x, H, n === 1 ? "decade" : "mid");
  }
}

// thumbnails
document.querySelectorAll(".thumb-grid").forEach((g) => {
  for (let i = 1; i < 10; i++) line(g, 0, i * 14.5, 216, i * 14.5);
  for (const base of [10, 100, 1000, 10000]) {
    for (let n = 1; n < 10; n++) {
      const x = 51.3 + Math.log10((base * n) / 100) * 72;
      if (x > 2 && x < 200) line(g, x, 0, x, 144);
    }
  }
});

// axis labels
function tick(axis, text, side, pos, cls) {
  const el = document.createElement("span");
  el.className = "tick " + (cls || "");
  el.textContent = text;
  if (side) el.style[side] = pos * 100 + "%";
  axis.appendChild(el);
}

const yAxis = document.querySelector(".y-axis");
[100, 90, 80, 70, 60, 50, 30, 20, 10, 0].forEach((db) => {
  tick(yAxis, db, "top", yOf(db) / H);
});
tick(yAxis, "40.8", "top", 523 / H, "readout");

const xAxis = document.querySelector(".x-axis");
tick(xAxis, "12", "left", 0);
[20, 30, 40, 50, 60, 70, 80, 100, 200, 300, 400, 500, 600, 800, 1000, 2000, 3000, 4000, 5000].forEach((f) => {
  tick(xAxis, f < 1000 ? f : (f / 1000).toFixed(1) + "k", "left", (xOf(f) + 2) / W);
});
tick(xAxis, "7.21kHz", "", 0, "tick-end");
tick(xAxis, "43.6", "left", 407 / W, "readout");

document.querySelectorAll(".scrolled").forEach((t) => {
  t.scrollTop = t.scrollHeight;
});
```
